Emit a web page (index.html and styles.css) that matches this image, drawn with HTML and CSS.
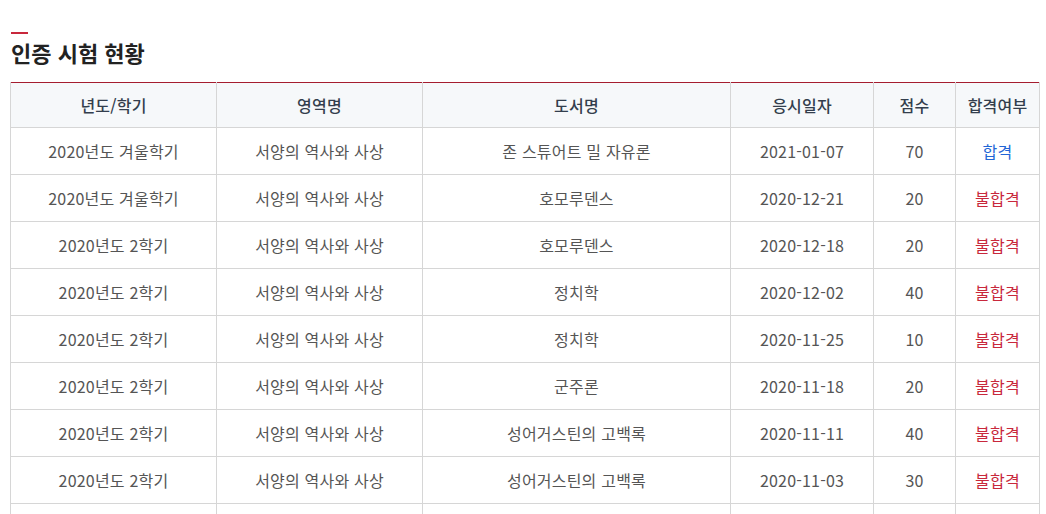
FILE: index.html
```html
<!DOCTYPE html>
<html lang="ko">
<head>
<meta charset="utf-8">
<link rel="stylesheet" href="styles.css">
</head>
<body>
<section class="exam">
  <h2 class="exam-title">인증 시험 현황</h2>
  <table class="exam-table">
    <colgroup>
      <col class="c1"><col class="c2"><col class="c3"><col class="c4"><col class="c5"><col class="c6">
    </colgroup>
    <thead>
      <tr><th>년도/학기</th><th>영역명</th><th>도서명</th><th>응시일자</th><th>점수</th><th>합격여부</th></tr>
    </thead>
    <tbody>
      <tr><td>2020년도 겨울학기</td><td>서양의 역사와 사상</td><td>존 스튜어트 밀 자유론</td><td>2021-01-07</td><td>70</td><td class="pass">합격</td></tr>
      <tr><td>2020년도 겨울학기</td><td>서양의 역사와 사상</td><td>호모루덴스</td><td>2020-12-21</td><td>20</td><td class="fail">불합격</td></tr>
      <tr><td>2020년도 2학기</td><td>서양의 역사와 사상</td><td>호모루덴스</td><td>2020-12-18</td><td>20</td><td class="fail">불합격</td></tr>
      <tr><td>2020년도 2학기</td><td>서양의 역사와 사상</td><td>정치학</td><td>2020-12-02</td><td>40</td><td class="fail">불합격</td></tr>
      <tr><td>2020년도 2학기</td><td>서양의 역사와 사상</td><td>정치학</td><td>2020-11-25</td><td>10</td><td class="fail">불합격</td></tr>
      <tr><td>2020년도 2학기</td><td>서양의 역사와 사상</td><td>군주론</td><td>2020-11-18</td><td>20</td><td class="fail">불합격</td></tr>
      <tr><td>2020년도 2학기</td><td>서양의 역사와 사상</td><td>성어거스틴의 고백록</td><td>2020-11-11</td><td>40</td><td class="fail">불합격</td></tr>
      <tr><td>2020년도 2학기</td><td>서양의 역사와 사상</td><td>성어거스틴의 고백록</td><td>2020-11-03</td><td>30</td><td class="fail">불합격</td></tr>
      <tr class="last"><td></td><td></td><td></td><td></td><td></td><td></td></tr>
    </tbody>
  </table>
</section>
</body>
</html>
```

FILE: styles.css
```css
html, body {
  margin: 0;
  padding: 0;
  background: #fff;
}
body {
  font-family: "Noto Sans CJK KR", "Noto Sans", sans-serif;
  color: #555;
}
.exam {
  padding: 32px 0 0 10px;
}
.exam-title {
  position: relative;
  margin: 0 0 0 1px;
  padding-top: 4px;
  font-size: 22px;
  line-height: 32px;
  font-weight: 700;
  color: #222;
  height: 50px;
  box-sizing: border-box;
}
.exam-title::before {
  content: "";
  position: absolute;
  left: 0;
  top: 0;
  width: 17px;
  height: 2px;
  background: #c8283c;
}
.exam-table {
  width: 1029px;
  border-collapse: collapse;
  table-layout: fixed;
  border-top: 1px solid #a51d2f;
  font-size: 16px;
  letter-spacing: 0.2px;
}
.c1 { width: 206px; }
.c2 { width: 206px; }
.c3 { width: 308px; }
.c4 { width: 143px; }
.c5 { width: 82px; }
.c6 { width: 84px; }
.exam-table th,
.exam-table td {
  border: 1px solid #d6d6d6;
  text-align: center;
  padding: 0;
}
.exam-table thead th {
  border-top: none;
  height: 44px;
  background: #f6f8fa;
  color: #333e4d;
  font-weight: 500;
}
.exam-table td {
  height: 46px;
  color: #555;
}
.exam-table td.pass { color: #2266d6; }
.exam-table td.fail { color: #c8283c; }
```
